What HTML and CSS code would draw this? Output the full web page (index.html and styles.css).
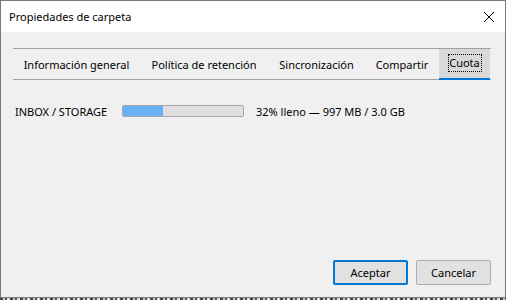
FILE: index.html
```html
<!DOCTYPE html>
<html lang="es">
<head>
<meta charset="utf-8">
<title>Propiedades de carpeta</title>
<link rel="stylesheet" href="styles.css">
</head>
<body>
<div class="window">
  <div class="titlebar">
    <span class="title">Propiedades de carpeta</span>
    <span class="close" aria-label="Cerrar">
      <svg width="12" height="12" viewBox="0 0 12 12"><path d="M1 1 L11 11 M11 1 L1 11" stroke="#000" stroke-width="1" fill="none"/></svg>
    </span>
  </div>
  <div class="content">
    <div class="tabs">
      <div class="tab t1">Información general</div>
      <div class="tab t2">Política de retención</div>
      <div class="tab t3">Sincronización</div>
      <div class="tab t4">Compartir</div>
      <div class="tab t5 active"><span class="focus">Cuota</span></div>
    </div>
    <div class="quota">
      <span class="qname">INBOX / STORAGE</span>
      <div class="bar"><div class="fill" style="width:33%"></div></div>
      <span class="qtext">32% lleno — 997 MB / 3.0 GB</span>
    </div>
    <div class="spacer"></div>
    <div class="footer">
      <button class="btn primary">Aceptar</button>
      <button class="btn">Cancelar</button>
    </div>
  </div>
</div>
<div class="behind"></div>
</body>
</html>
```
FILE: styles.css
```css
* { box-sizing: border-box; }
html, body { margin: 0; padding: 0; }
body {
  width: 506px;
  height: 300px;
  overflow: hidden;
  background: #3a4a5a;
  font-family: "Noto Sans", "Open Sans", sans-serif;
  font-size: 11px;
  color: #000;
}
.window {
  width: 506px;
  height: 298px;
  border: 1px solid #7a7a7a;
  background: #f0f0f0;
  display: flex;
  flex-direction: column;
}
.titlebar {
  height: 31px;
  background: #fff;
  display: flex;
  align-items: center;
  justify-content: space-between;
  padding-left: 8px;
  padding-right: 10px;
  flex: none;
}
.title { font-size: 11px; line-height: 16px; }
.close { display: flex; width: 12px; height: 12px; }
.content {
  flex: 1;
  display: flex;
  flex-direction: column;
  padding: 16px 14px 12px 12px;
}
.tabs {
  display: flex;
  border-top: 1px solid #a0a0a0;
  border-bottom: 1px solid #a0a0a0;
  height: 32px;
}
.tab {
  flex: none;
  height: 30px;
  display: flex;
  align-items: center;
  justify-content: center;
  white-space: nowrap;
}
.t1 { width: 127px; }
.t2 { width: 128px; }
.t3 { width: 97px; }
.t4 { width: 74px; }
.t5 { width: 51px; }
.tab.active {
  background: #d9d9d9;
  border-bottom: 2px solid #0078d7;
  height: 31px;
  margin-bottom: -1px;
}
.focus {
  border: 1px dotted #000;
  width: 34px;
  height: 18px;
  display: flex;
  align-items: center;
  justify-content: center;
  margin-top: -2px;
}
.quota {
  display: flex;
  align-items: center;
  margin-top: 25px;
  padding-left: 2px;
  height: 12px;
}
.qname { width: 107px; white-space: nowrap; }
.bar {
  width: 122px;
  height: 12px;
  border: 1px solid #a6a6a6;
  border-radius: 2px;
  background: #e0e0e0;
  overflow: hidden;
  margin-right: 12px;
}
.fill { height: 100%; background: #6ab0f6; }
.qtext { white-space: nowrap; }
.spacer { flex: 1; }
.footer {
  display: flex;
  justify-content: flex-end;
  gap: 8px;
}
.btn {
  width: 75px;
  height: 25px;
  font-family: inherit;
  font-size: 11px;
  color: #000;
  background: #e1e1e1;
  border: 1px solid #adadad;
  border-radius: 2px;
  padding: 0;
}
.btn.primary { border: 2px solid #0078d7; }
.behind {
  height: 2px;
  background: repeating-linear-gradient(90deg, #444 0 3px, #c8c8c8 3px 5px, #555 5px 7px, #e0e0e0 7px 10px);
}
```
